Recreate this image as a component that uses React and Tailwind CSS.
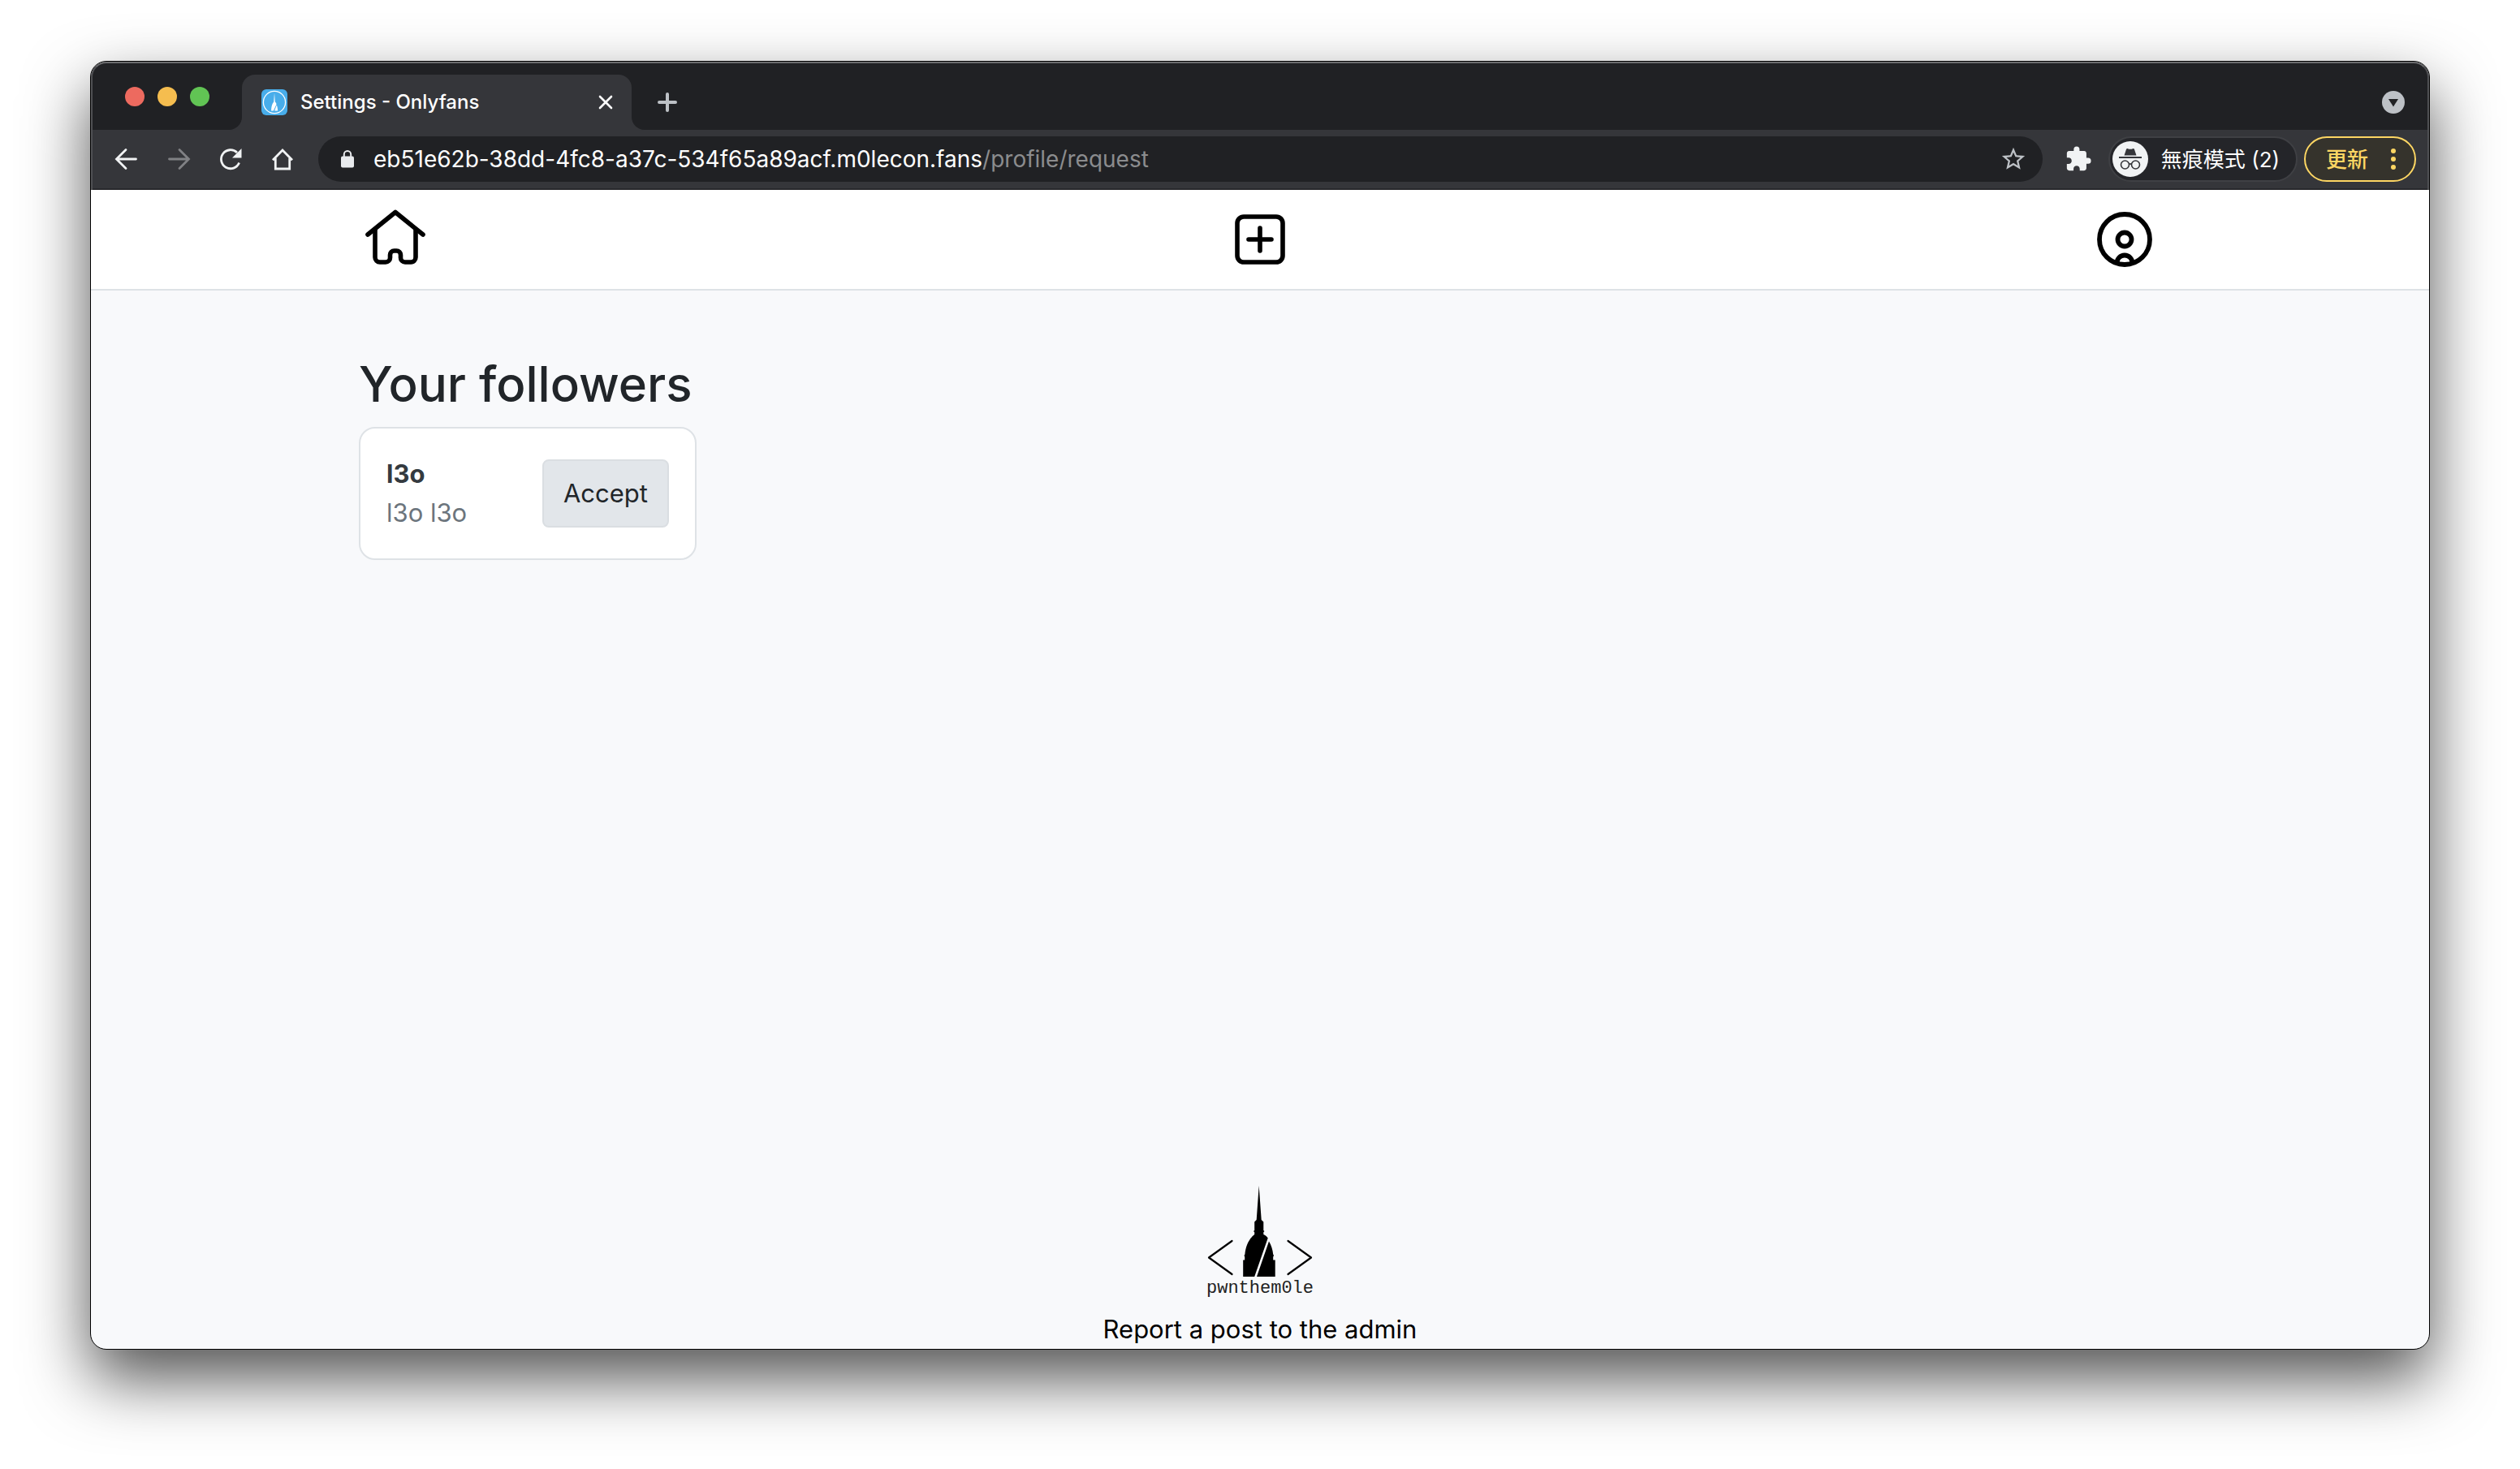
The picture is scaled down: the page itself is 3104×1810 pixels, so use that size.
import React from "react";

function TrafficLights() {
  return (
    <div className="flex gap-4 self-start pt-[31px]">
      <span className="size-6 rounded-full bg-[#ed6a5f]" />
      <span className="size-6 rounded-full bg-[#f5bd4f]" />
      <span className="size-6 rounded-full bg-[#61c454]" />
    </div>
  );
}

function Favicon() {
  return (
    <svg viewBox="0 0 32 32" className="size-8 shrink-0" aria-hidden="true">
      <rect width="32" height="32" rx="6" fill="#48adea" />
      <circle cx="16" cy="16" r="13.6" fill="none" stroke="#fff" strokeWidth="1.3" />
      <path d="M16 4.500l.8 11c1.200 1 1.600 2 1.700 3L14.800 26.500H12c.2-5 1-8.500 3.200-11z" fill="#fff" />
      <path d="M18.800 19.500c.9 2 1.200 4 1.300 7h-4z" fill="#fff" />
    </svg>
  );
}

function TabStrip() {
  return (
    <div className="flex h-[84px] items-end bg-[#202124] pl-[42px] pr-[30px]">
      <TrafficLights />
      <div className="ml-6 size-4 bg-[#35363a]">
        <div className="size-4 rounded-br-2xl bg-[#202124]" />
      </div>
      <div className="flex h-[68px] w-[480px] items-center rounded-t-2xl bg-[#35363a] pl-6 pr-5 text-white">
        <Favicon />
        <span className="ml-4 grow text-2xl font-medium">Settings - Onlyfans</span>
        <button aria-label="Close tab" className="flex size-6 items-center justify-center">
          <svg viewBox="0 0 18 18" className="size-[18px]" fill="none" stroke="#fff" strokeWidth="2.600" strokeLinecap="round">
            <path d="M2 2l14 14M16 2L2 16" />
          </svg>
        </button>
      </div>
      <div className="size-4 bg-[#35363a]">
        <div className="size-4 rounded-bl-2xl bg-[#202124]" />
      </div>
      <button aria-label="New tab" className="ml-4 flex h-[68px] items-center">
        <svg viewBox="0 0 24 24" className="size-6" fill="none" stroke="#bdc1c6" strokeWidth="4" strokeLinecap="round">
          <path d="M12 2v20M2 12h20" />
        </svg>
      </button>
      <button aria-label="Search tabs" className="ml-auto flex h-[68px] items-center">
        <svg viewBox="0 0 28 28" className="size-7">
          <circle cx="14" cy="14" r="14" fill="#bdc1c6" />
          <path d="M8 10h12l-6 9.500z" fill="#202124" />
        </svg>
      </button>
    </div>
  );
}

function AddressBar() {
  return (
    <div className="ml-[26px] flex h-14 grow items-center rounded-full bg-[#202124] pl-7 pr-[19px]">
      <svg viewBox="0 0 16 22" className="h-[22px] w-4 shrink-0" aria-hidden="true">
        <path d="M3.800 9V5.200a4.200 4.200 0 0 1 8.400 0V9" fill="none" stroke="#e8eaed" strokeWidth="2" />
        <rect y="7.500" width="16" height="14" rx="2" fill="#e8eaed" />
      </svg>
      <p className="ml-6 grow text-[28px] leading-9 text-white">
        eb51e62b-38dd-4fc8-a37c-534f65a89acf.m0lecon.fans<span className="text-[#8b8c8e]">/profile/request</span>
      </p>
      <button aria-label="Bookmark this tab">
        <svg viewBox="0 0 24 24" className="block size-[34px]" fill="#bdc1c6">
          <path d="M22 9.240l-7.190-.62L12 2 9.190 8.630 2 9.240l5.460 4.730L5.820 21 12 17.270 18.180 21l-1.630-7.030L22 9.240zM12 15.400l-3.760 2.270 1-4.280-3.320-2.880 4.380-.38L12 6.100l1.710 4.040 4.380.38-3.320 2.880 1 4.280L12 15.400z" />
        </svg>
      </button>
    </div>
  );
}

function IncognitoBadge() {
  return (
    <button className="ml-5 flex h-14 items-center rounded-full border-2 border-[#3f4044] bg-[#242529] pl-[3px] pr-5 text-[26px] text-white">
      <svg viewBox="0 0 44 44" className="size-11" aria-hidden="true">
        <circle cx="22" cy="22" r="22" fill="#f1f3f4" />
        <path d="M14.500 17.500l2.500-7.500c.3-1 1.200-1.200 2-.8 1.800.8 4.200.8 6 0 .8-.4 1.700-.2 2 .8l2.500 7.500z" fill="#35363a" />
        <path d="M8 20h28" stroke="#35363a" strokeWidth="2" />
        <g fill="none" stroke="#35363a" strokeWidth="1.600">
          <circle cx="15.500" cy="29" r="5" />
          <circle cx="28.500" cy="29" r="5" />
          <path d="M20.500 28.500c1-.8 2-.8 3 0" />
        </g>
      </svg>
      <span className="ml-4">無痕模式 (2)</span>
    </button>
  );
}

function Toolbar() {
  return (
    <div className="flex h-[74px] items-center border-b-2 border-[#28292c] bg-[#35363a] pl-[26px] pr-4">
      <div className="flex gap-7">
        <button aria-label="Back">
          <svg viewBox="0 0 36 36" className="block size-9" fill="none" stroke="#f1f3f4" strokeWidth="2.800" strokeLinecap="round">
            <path d="M29.500 18H6.500M17 6.500L5.500 18 17 29.500" />
          </svg>
        </button>
        <button aria-label="Forward">
          <svg viewBox="0 0 36 36" className="block size-9" fill="none" stroke="#808184" strokeWidth="2.800" strokeLinecap="round">
            <path d="M6.500 18h23M19 6.500L30.500 18 19 29.500" />
          </svg>
        </button>
        <button aria-label="Reload">
          <svg viewBox="0 0 36 36" className="block size-9">
            <path d="M28.600 22.500A11.500 11.500 0 1 1 26 10" fill="none" stroke="#f1f3f4" strokeWidth="2.800" />
            <path d="M31.500 5v11.500H20z" fill="#f1f3f4" />
          </svg>
        </button>
        <button aria-label="Home">
          <svg viewBox="0 0 36 36" className="block size-9" fill="none" stroke="#f1f3f4" strokeWidth="2.800">
            <path d="M6 19.300L18 7l12 12.300M9.300 17v13h17.400V17" />
          </svg>
        </button>
      </div>
      <AddressBar />
      <button aria-label="Extensions" className="ml-[27px]">
        <svg viewBox="0 0 24 24" className="block size-[34px]" fill="#f1f3f4">
          <path d="M20.500 11H19V7c0-1.100-.9-2-2-2h-4V3.500a2.500 2.500 0 0 0-5 0V5H4c-1.100 0-1.990.9-1.990 2v3.800H3.500c1.490 0 2.700 1.210 2.700 2.700s-1.210 2.700-2.700 2.700H2V20c0 1.100.9 2 2 2h3.800v-1.500c0-1.490 1.210-2.700 2.700-2.700s2.700 1.210 2.700 2.700V22H17c1.100 0 2-.9 2-2v-4h1.500a2.500 2.500 0 0 0 0-5z" />
        </svg>
      </button>
      <IncognitoBadge />
      <button className="ml-2 flex h-14 items-center rounded-full border-2 border-[#fdd663] bg-[#35332c] pl-[25px] pr-[23px] text-[26px] font-medium text-[#fdd663]">
        更新
        <svg viewBox="0 0 6 28" className="ml-7 h-7 w-[6px]" fill="#fdd663" aria-hidden="true">
          <circle cx="3" cy="4" r="3" />
          <circle cx="3" cy="14" r="3" />
          <circle cx="3" cy="24" r="3" />
        </svg>
      </button>
    </div>
  );
}

function SiteNav() {
  return (
    <nav className="border-b-2 border-[#dee2e6] bg-white">
      <div className="mx-auto flex h-[122px] w-full max-w-[2220px] items-center justify-between">
        <a href="#home" aria-label="Home" className="flex w-[90px] justify-center">
          <svg viewBox="0 4 80 80" className="size-20" fill="none" stroke="#000" strokeWidth="5.600" strokeLinecap="round" strokeLinejoin="round">
            <path d="M6 38L40 10.500 74 38" />
            <path d="M15 32v34a6 6 0 0 0 6 6h7a5.500 5.500 0 0 0 5.500-5.500V63a5 5 0 0 1 5-5h3a5 5 0 0 1 5 5v3.500A5.500 5.500 0 0 0 52 72h7a6 6 0 0 0 6-6V32" />
          </svg>
        </a>
        <a href="#new" aria-label="New post" className="flex w-[90px] justify-center">
          <svg viewBox="0 0 80 80" className="size-20" fill="none" stroke="#000" strokeWidth="5.600" strokeLinecap="round">
            <rect x="12" y="12" width="56" height="56" rx="8" />
            <path d="M40 26v28M26 40h28" />
          </svg>
        </a>
        <a href="#profile" aria-label="Profile" className="flex w-[90px] justify-center">
          <svg viewBox="0 0 80 80" className="size-20" fill="none" stroke="#000" strokeWidth="5.800">
            <circle cx="40" cy="40" r="31" />
            <circle cx="40" cy="40" r="8.500" />
            <path d="M30.500 69a9.500 9.500 0 0 1 19 0" />
          </svg>
        </a>
      </div>
    </nav>
  );
}

function Followers() {
  return (
    <main className="mx-auto w-full max-w-[2220px] grow pt-[78px]">
      <h2 className="text-[60px] font-medium leading-[74px] text-[#212529]">Your followers</h2>
      <div className="mt-4 flex w-[416px] items-center justify-between rounded-[20px] border-2 border-[#dee2e6] bg-white p-8">
        <div className="leading-[48px]">
          <p className="font-bold text-[#343a40]">l3o</p>
          <p className="text-[#6c757d]">l3o l3o</p>
        </div>
        <button className="h-[84px] rounded-lg border-2 border-[#dadee2] bg-[#e2e6ea] px-6 text-[#212529]">
          Accept
        </button>
      </div>
    </main>
  );
}

function SiteFooter() {
  return (
    <footer className="flex flex-col items-center text-black">
      <svg viewBox="0 0 136 116" className="h-[116px] w-[136px]" aria-hidden="true">
        <path d="M66.700 1l3 42 2.600 2.500v10.500l1.200 1-1.200 1.200v2.800c2 .8 4.200 2.500 5.400 4.500L61.200 113H47.200V92.500h2v-4l-.7-1.500.9-1.500c1-10.500 5-19 11.800-24.500v-2.800l-1.200-1.200 1.200-1V45.500l2.500-2.500z" />
        <path d="M79 69.500c3 5 4.600 10 5.200 16l.9 1.500-.9 1.500v4h2.500V113H64z" />
        <g fill="none" stroke="#000" strokeWidth="2.200" strokeLinecap="round" strokeLinejoin="round">
          <path d="M33.500 69L5 89.500 33.500 110" />
          <path d="M102.500 69L131 89.500 102.500 110" />
        </g>
      </svg>
      <p className="font-[Liberation_Mono,monospace] text-[22px] leading-6 text-[#222]">pwnthem0le</p>
      <a href="#report" className="mt-[14px] leading-[48px]">Report a post to the admin</a>
    </footer>
  );
}

export default function App() {
  return (
    <div className="flex min-h-screen bg-white px-[111px] pb-[147px] pt-[75px] font-[Inter,'Noto_Sans_CJK_TC',sans-serif] text-[31px]">
      <div className="flex grow flex-col overflow-hidden rounded-[20px] border border-black bg-[#f8f9fb] shadow-[0_36px_80px_rgba(0,0,0,0.68)]">
        <header className="relative">
          <TabStrip />
          <Toolbar />
          <div className="pointer-events-none absolute inset-0 rounded-t-[19px] border-x-2 border-t-2 border-x-[#505154] border-t-[#6b6c6e]" />
        </header>
        <SiteNav />
        <Followers />
        <SiteFooter />
      </div>
    </div>
  );
}
